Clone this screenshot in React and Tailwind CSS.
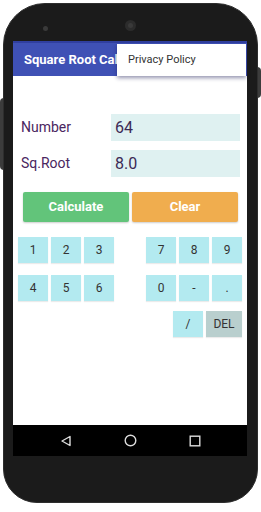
import React from "react";

const leftKeys = [
  ["1", "2", "3"],
  ["4", "5", "6"],
];
const rightKeys = [
  ["7", "8", "9"],
  ["0", "-", "."],
];

function Key({ label, wide, grey }) {
  return (
    <div
      className={`h-[26px] ${wide ? "w-[36px]" : "w-[30px]"} ${
        grey ? "bg-[#b9cfce]" : "bg-[#b3eaf0]"
      } flex items-center justify-center text-[12px] text-[#333] shadow-[0_1px_1px_rgba(0,0,0,0.08)]`}>
      {label}
    </div>
  );
}

export default function App() {
  return (
    <div className="relative w-[261px] h-[512px] bg-white overflow-hidden font-['Roboto',sans-serif]">
      {/* side buttons */}
      <div className="absolute left-0 top-[98px] w-[4px] h-[72px] bg-[#3c3c3c] rounded-l-sm" />
      <div className="absolute right-0 top-[67px] w-[4px] h-[31px] bg-[#3c3c3c] rounded-r-sm" />

      {/* phone body */}
      <div className="relative ml-[3px] mt-[3px] w-[255px] h-[500px] rounded-t-[42px] rounded-b-[34px] bg-[#1b1b1b] border border-[#2e2e2e] pt-[37px]">
        {/* camera + sensor */}
        <div className="absolute left-[121px] top-[16px] w-[11px] h-[11px] rounded-full bg-[#2c2c2c] flex items-center justify-center">
          <div className="w-[5px] h-[5px] rounded-full bg-[#3a3a3a]" />
        </div>
        <div className="absolute left-[39px] top-[22px] w-[5px] h-[5px] rounded-full bg-[#3a3a3a]" />

        {/* screen */}
        <div className="ml-[9px] w-[234px]">
          <div className="relative h-[384px] bg-white">
            {/* app bar */}
            <div className="h-[2px] bg-[#303f9f]" />
            <div className="h-[33px] bg-[#3f51b5] flex items-center pl-[11px]">
              <span className="text-white text-[13px] font-bold whitespace-nowrap">
                Square Root Cal
              </span>
            </div>

            {/* overflow menu */}
            <div className="absolute left-[104px] top-[3px] w-[129px] h-[32px] bg-white shadow-[0_2px_4px_rgba(20,20,80,0.45)] flex items-center pl-[11px]">
              <span className="text-[11px] text-[#333]">Privacy Policy</span>
            </div>

            {/* inputs */}
            <div className="flex flex-col gap-[9px] mt-[38px]">
              <div className="flex items-center">
                <span className="w-[98px] pl-[8px] text-[14px] text-[#4a2660]">Number</span>
                <div className="w-[129px] h-[27px] bg-[#dff1f1] flex items-center pl-[4px] text-[16px] text-[#3b2a55]">
                  64
                </div>
              </div>
              <div className="flex items-center">
                <span className="w-[98px] pl-[8px] text-[14px] text-[#4a2660]">Sq.Root</span>
                <div className="w-[129px] h-[27px] bg-[#dff1f1] flex items-center pl-[4px] text-[16px] text-[#3b2a55]">
                  8.0
                </div>
              </div>
            </div>

            {/* action buttons */}
            <div className="flex gap-[3px] ml-[10px] mt-[15px]">
              <div className="w-[106px] h-[30px] bg-[#62c47a] rounded-[2px] flex items-center justify-center text-white text-[13px] font-bold shadow-[0_1px_2px_rgba(0,0,0,0.2)]">
                Calculate
              </div>
              <div className="w-[106px] h-[30px] bg-[#f0ad4e] rounded-[2px] flex items-center justify-center text-white text-[13px] font-bold shadow-[0_1px_2px_rgba(0,0,0,0.2)]">
                Clear
              </div>
            </div>

            {/* keypad */}
            <div className="flex flex-col gap-[12px] mt-[15px]">
              {leftKeys.map((row, i) => (
                <div key={i} className="flex">
                  <div className="flex gap-[3px] ml-[5px]">
                    {row.map((k) => (
                      <Key key={k} label={k} />
                    ))}
                  </div>
                  <div className="flex gap-[3px] ml-[32px]">
                    {rightKeys[i].map((k) => (
                      <Key key={k} label={k} />
                    ))}
                  </div>
                </div>
              ))}
            </div>
            <div className="flex gap-[3px] ml-[160px] mt-[10px]">
              <Key label="/" />
              <Key label="DEL" wide grey />
            </div>
          </div>

          {/* nav bar */}
          <div className="h-[31px] bg-black flex items-center justify-center gap-[52px] pl-[1px]">
            <svg width="12" height="12" viewBox="0 0 12 12">
              <path d="M10 1.5 L2 6 L10 10.5 Z" fill="none" stroke="#ddd" strokeWidth="1.4" strokeLinejoin="round" />
            </svg>
            <svg width="13" height="13" viewBox="0 0 13 13">
              <circle cx="6.5" cy="6.5" r="5.3" fill="none" stroke="#ddd" strokeWidth="1.4" />
            </svg>
            <svg width="12" height="12" viewBox="0 0 12 12">
              <rect x="1.2" y="1.2" width="9.6" height="9.6" fill="none" stroke="#ddd" strokeWidth="1.4" />
            </svg>
          </div>
        </div>
      </div>
    </div>
  );
}
